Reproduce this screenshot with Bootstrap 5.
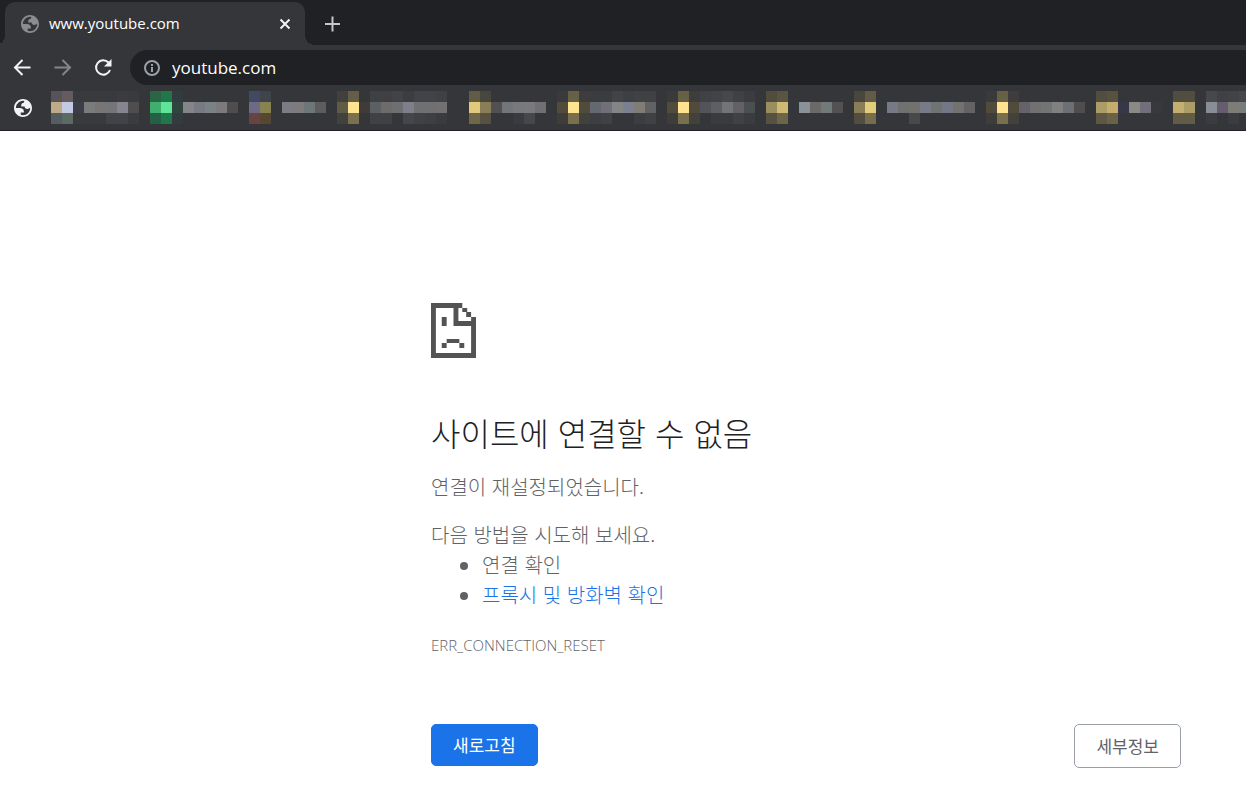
<!DOCTYPE html>
<html lang="ko">
<head>
<meta charset="utf-8">
<meta name="viewport" content="width=device-width, initial-scale=1">
<title>www.youtube.com</title>
<link href="https://cdn.jsdelivr.net/npm/bootstrap@5.3.0/dist/css/bootstrap.min.css" rel="stylesheet">
<style>
  body { font-family: "Open Sans", "Noto Sans CJK KR", sans-serif; background: #fff; overflow-x: hidden; }
  svg { display: block; flex: none; }
  .tabstrip { background: #202124; height: 45px; padding: 2px 0 0 5px; }
  .site-tab { position: relative; width: 300px; height: 43px; background: #35363a; border-radius: 10px 10px 0 0; padding: 0 13px 0 16px; color: #fff; font-size: 15px; }
  .site-tab::before, .site-tab::after { content: ""; position: absolute; bottom: 0; width: 10px; height: 10px; }
  .site-tab::before { left: -10px; background: radial-gradient(circle at 0 0, transparent 10px, #35363a 10px); }
  .site-tab::after { right: -10px; background: radial-gradient(circle at 100% 0, transparent 10px, #35363a 10px); }
  .tab-title { padding-left: 10px; }
  .icon-btn { border: 0; padding: 0; background: none; color: #f1f3f4; }
  .toolbar { background: #35363a; padding: 5px 0 1px 13px; }
  .nav-buttons { gap: 20px; }
  .address { background: #202124; height: 35px; border-radius: 18px 0 0 18px; padding-left: 14px; margin-left: 17px; }
  .address input { background: none; border: 0; outline: 0; color: #fff; font-size: 17px; padding: 0; }
  .bookmarks { background: #35363a; height: 45px; padding: 5px 0 6px 14px; border-bottom: 1px solid #202124; overflow: hidden; }
  .home-mark { margin-right: 19px; }
  .error-page { max-width: 750px; margin: 172px 65px 0 auto; color: #5f6368; font-weight: 300; font-family: "Noto Sans CJK KR", sans-serif; font-size: 20px; line-height: 30px; }
  .error-page h1 { font-size: 32px; line-height: 38px; font-weight: 300; color: #202124; margin: 55px 0 21px; }
  .error-page p { margin-bottom: 18px; }
  .error-page ul { padding-left: 51px; margin-bottom: 20px; }
  .error-page a { color: #1a73e8; text-decoration: none; }
  .error-code { font-family: "Open Sans", sans-serif; font-size: 15px; }
  .error-page .btn { font-size: 17px; line-height: 24px; padding: 8px 21px; border-radius: 5px; }
  .reload { background: #1a73e8; color: #fff; border: 1px solid #1a73e8; }
  .details { color: #5f6368; border: 1px solid #9aa0a6; min-height: 44px; }
</style>
</head>
<body>
<header>
  <div class="tabstrip d-flex align-items-center">
    <div class="site-tab d-flex align-items-center">
      <svg width="18" height="18" viewBox="2 2 20 20" fill="#8b8c8e" fill-rule="evenodd"><path id="globe" d="M12 2C6.480 2 2 6.480 2 12s4.480 10 10 10 10-4.480 10-10S17.520 2 12 2zM4 12h4.400c3.407.022 4.922 1.730 4.543 5.127H9.488v2.470a8.004 8.004 0 0 0 10.498-8.083C19.327 12.504 18.332 13 17 13c-2.137 0-3.206-.916-3.206-2.750h-3.748c-.274-2.728.683-4.092 2.870-4.092 0-.975.327-1.597.811-1.970A8.004 8.004 0 0 0 4 12z"/></svg>
      <span class="tab-title flex-grow-1">www.youtube.com</span>
      <button class="icon-btn" type="button" aria-label="닫기"><svg width="14" height="14" viewBox="0 0 14 14" fill="none" stroke="currentColor" stroke-width="2"><path d="M2.500 2.500l9 9M11.500 2.500l-9 9"/></svg></button>
    </div>
    <button class="icon-btn ms-3" type="button" aria-label="새 탭"><svg width="23" height="16" viewBox="0 0 23 16" fill="none" stroke="#c6c7c9" stroke-width="2"><path d="M11.500 .5v15M4 8h15"/></svg></button>
  </div>
  <div class="toolbar d-flex align-items-center">
    <div class="nav-buttons d-flex align-items-center">
      <button class="icon-btn" type="button" aria-label="뒤로"><svg width="20" height="20" viewBox="0 0 20 20" fill="none" stroke="currentColor" stroke-width="2"><path d="M17.500 9.500H3M9.500 2L2 9.500 9.500 17"/></svg></button>
      <button class="icon-btn" type="button" aria-label="앞으로"><svg width="20" height="20" viewBox="0 0 20 20" fill="none" stroke="#85868a" stroke-width="2"><path d="M1.500 9.500H16M9.500 2L17 9.500 9.500 17"/></svg></button>
      <button class="icon-btn" type="button" aria-label="새로고침"><svg width="20" height="20" viewBox="0 0 20 20"><path d="M15.500 4.500A7.200 7.200 0 1 0 17 12" fill="none" stroke="currentColor" stroke-width="2"/><path d="M18.500 1v7.500H11z" fill="currentColor"/></svg></button>
    </div>
    <div class="address d-flex align-items-center flex-grow-1">
      <svg width="16" height="16" viewBox="0 0 16 16"><circle cx="8" cy="8" r="7" fill="none" stroke="#9aa0a6" stroke-width="2"/><path d="M7 7h2v5H7zM7 4h2v2H7z" fill="#9aa0a6"/></svg>
      <input class="flex-grow-1 ms-2 ps-1" type="text" value="youtube.com" aria-label="주소">
    </div>
  </div>
  <nav class="bookmarks d-flex align-items-center" id="bookmarks" aria-label="북마크">
    <a href="#" class="home-mark" aria-label="북마크"><svg width="18" height="18" viewBox="2 2 20 20" fill="#f1f3f4" fill-rule="evenodd"><use href="#globe"/></svg></a>
  </nav>
</header>
<main class="error-page">
  <svg width="45" height="55" viewBox="0 0 46 55" preserveAspectRatio="none" fill="#535353"><path d="M0 0h32v5H5v45h36V23H23V5h5v13h18v37H0z"/><path d="M32 5h5v4h-5zM36 9h5v5h-5zM41 14h5v5h-5zM11 14h5v9h-5zM16 36h13v4H16zM11 40h5v5h-5zM29 40h5v5h-5z"/></svg>
  <h1>사이트에 연결할 수 없음</h1>
  <p>연결이 재설정되었습니다.</p>
  <div>다음 방법을 시도해 보세요.</div>
  <ul>
    <li>연결 확인</li>
    <li><a href="#">프록시 및 방화벽 확인</a></li>
  </ul>
  <div class="error-code">ERR_CONNECTION_RESET</div>
  <div class="d-flex justify-content-between align-items-start mt-5 pt-3">
    <button class="btn reload" type="button">새로고침</button>
    <button class="btn details" type="button">세부정보</button>
  </div>
</main>
<script src="https://cdn.jsdelivr.net/npm/bootstrap@5.3.0/dist/js/bootstrap.bundle.min.js"></script>
<script>
  // Each bookmark: width in cells, then three rows of cell colours ("-" is empty)
  const folder = ['3b3a3a 666046 3e3c3c', '504b3b ffe391 504b3b', '3f3c3a 786f4d 43413b'];
  const bookmarks = [
    [9, '585358 655a5d 393a3d 393a3d 393a3d 393a3d 3c3c40 393a3d', 'c0a986 c3c9e3 3b3e48 7b7b7d 787576 747578 85848f 504d4e', '555d60 5d6a63 393a3d 393a3d 393a3d 424346 424346 3b3c40'],
    [9, '2a6645 20774a 323b3d', '3eaf6d 60e49a 30433c 858489 787a83 7a8285 7c7a7d 504d4e', '255f45 20774a 323b3d'],
    [8, '414a60 3f444b', '6f6988 87824f - 7c7c85 7d7b7b 6d7678 5f5c5e', '674442 574730'],
    [12, '42403c 645e46 - 3f4044 3f4044 424348 3c3d41 424348 424348 404145', '605b44 ffe391 3e3b39 5b6163 6e6c69 6e6f71 7e7f8b 6f7071 6f7071 727071', '43413c 78704e - 3f4144 3f4144 - 45464a 3f4144 3e3f42 3a3b3e'],
    [8, '625b45 49463d', 'e1ca7b 897e56 515153 727579 79797b 7a7a7c 707073', '6e6749 565141 - - 3a3b40 46474b'],
    [10, folder[0] + ' 3b3c3f 3b3c3f 424347 3e3f43 404145 404145', folder[1] + ' 636871 717079 828583 7a8090 7f7d75 606264', folder[2] + ' 3d3e42 404145 - - 3c3d41 404145'],
    [9, folder[0] + ' 404145 424347 47484b 404145 3b3c40', folder[1] + ' 525459 5d5f64 737478 636164 4b4f52', folder[2] + ' - 3a3b3e 3a3b3e 404145 3b3c40'],
    [8, '504d3e 5a5540', '9b8e5e cfba73 - 8a9199 6c6a69 727a79 545152', '565141 6c6548'],
    [12, '49463d 625b45', '897e56 e3cc7b - 777986 707070 737170 777a87 717373 747786 737270 636365', '524d40 756d4c - - - 47494d'],
    [10, folder[0], folder[1] + ' 65626b 727071 727475 808080 6c6f73 504d4f', folder[2]],
    [7, '514d3f 57523f', 'ac9d66 c3ae6d 373747 8b8985 71707a 39393c', '5d5743 696148'],
    [7, '514d3f 514d3f - 46484b 404145 424347 46474b', 'c3b06e ac9d66 - 898e96 655d6f 7c7d75 767f7d', '625b45 625b45 - 3b3c40 - 3b3c40 -']
  ];
  const bar = document.getElementById('bookmarks');
  for (const [cells, ...rows] of bookmarks) {
    const rects = rows.map((row, y) => row.split(' ').map((c, x) =>
      c === '-' ? '' : `<rect x="${x * 11}" y="${y * 11}" width="11" height="11" fill="#${c}"/>`).join('')).join('');
    bar.insertAdjacentHTML('beforeend',
      `<a href="#" aria-label="북마크"><svg width="${cells * 11}" height="33" shape-rendering="crispEdges">${rects}</svg></a>`);
  }
</script>
</body>
</html>
